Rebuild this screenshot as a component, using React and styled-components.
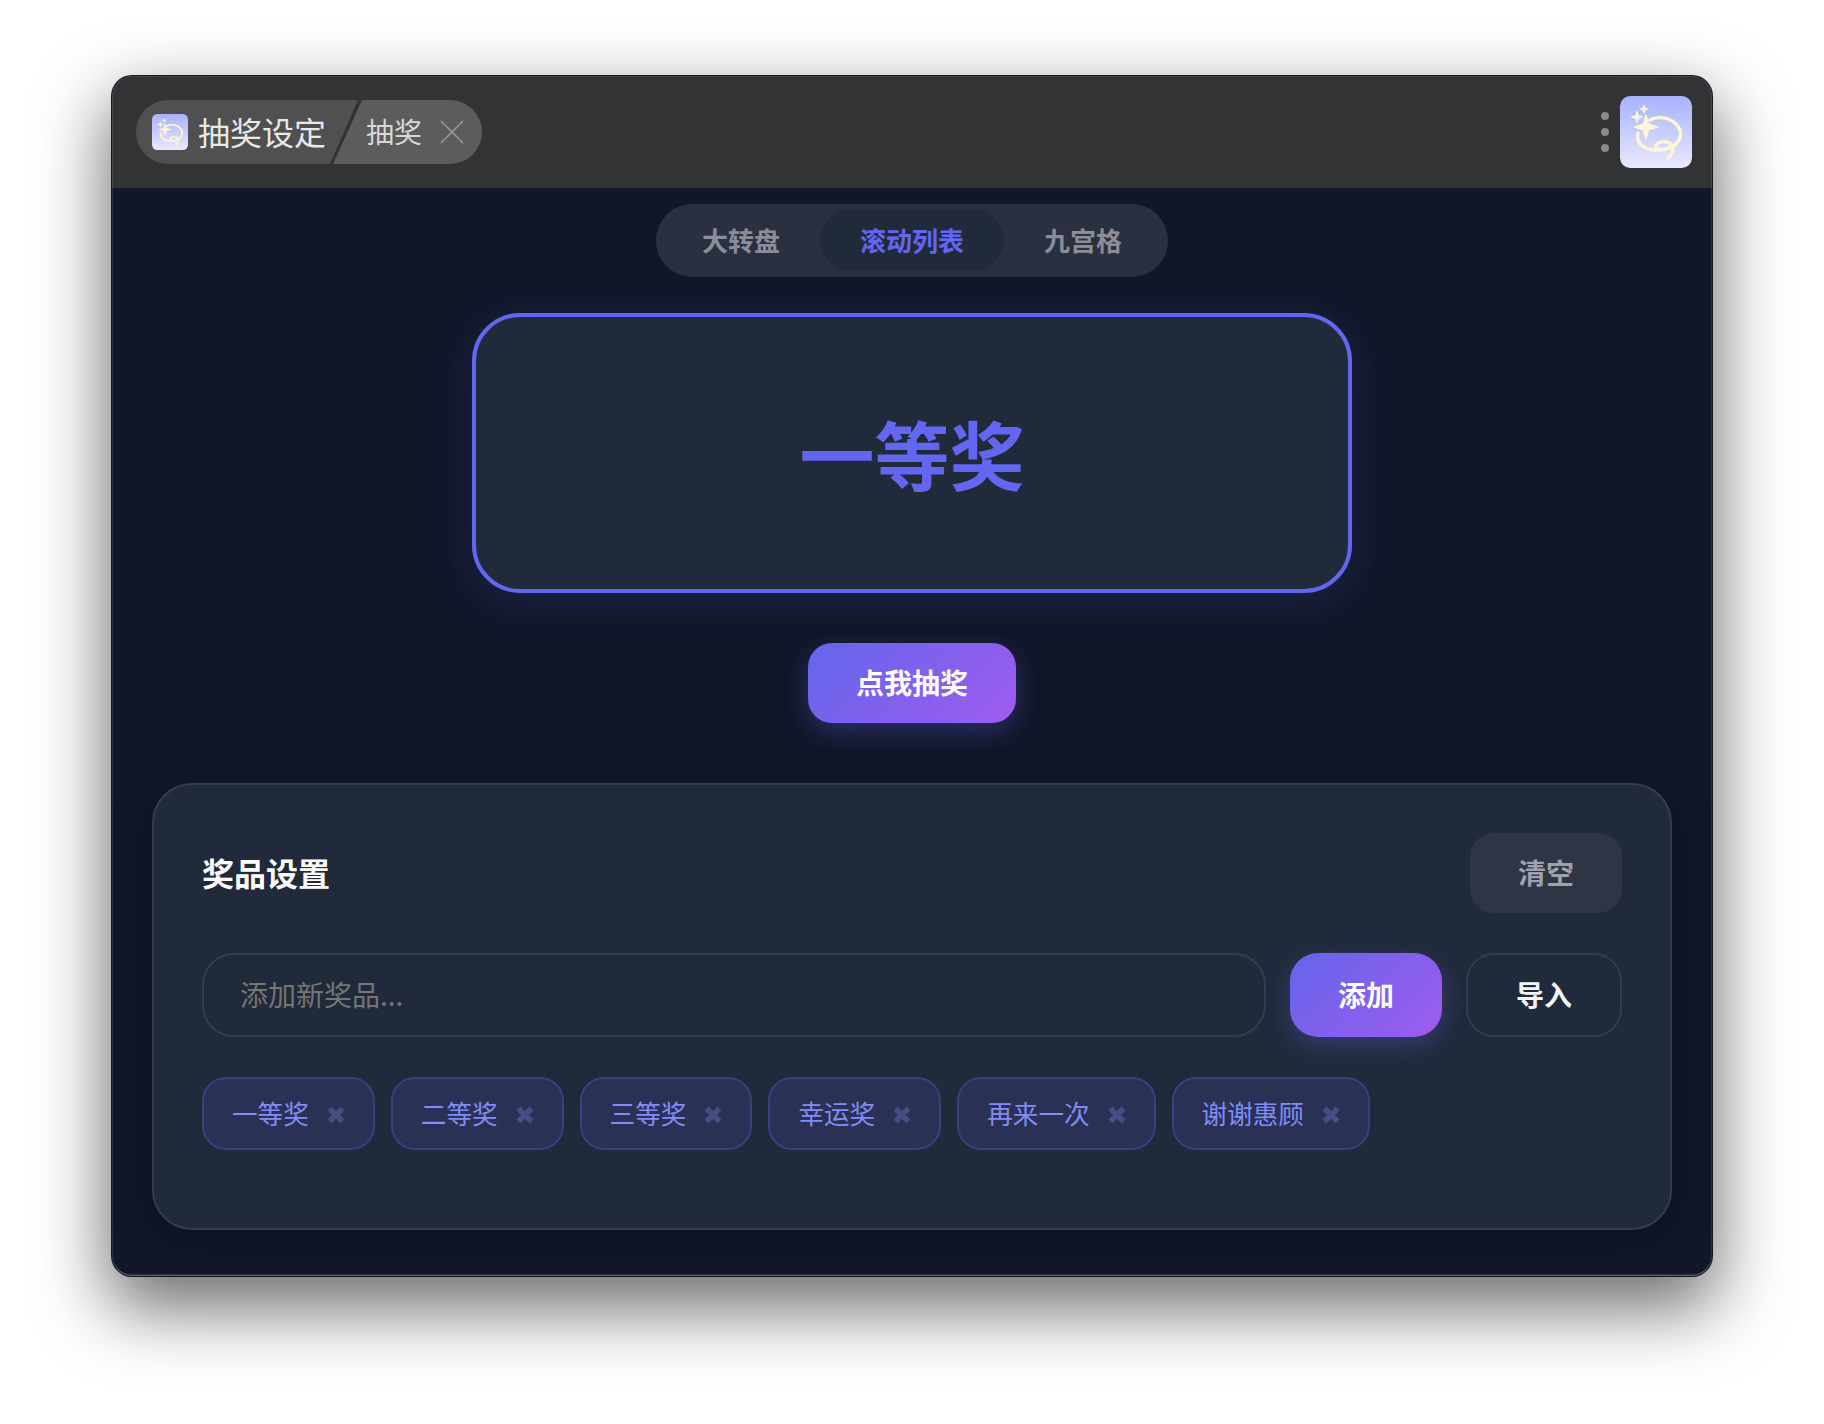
import React, { useState } from "react";
import styled, { createGlobalStyle } from "styled-components";

const GlobalStyle = createGlobalStyle`
  * { box-sizing: border-box; }
  html, body { margin: 0; background: #fff; }
  body { font-family: "Noto Sans CJK SC", "Noto Sans", sans-serif; }
`;

const Page = styled.div`
  width: 1824px;
  height: 1424px;
  padding-top: 76px;
  overflow: hidden;
`;

const Window = styled.div`
  position: relative;
  width: 1600px;
  height: 1200px;
  margin: 0 auto;
  border-radius: 20px;
  overflow: hidden;
  display: flex;
  flex-direction: column;
  background: #111729;
  box-shadow: 0 0 0 1px #18181a, 0 28px 70px 4px rgba(0, 0, 0, 0.58);
  &::after {
    content: "";
    position: absolute;
    inset: 0;
    border-radius: 20px;
    pointer-events: none;
    box-shadow: inset 0 -1.5px 0 rgba(255, 255, 255, 0.24), inset 0 0 0 1px rgba(255, 255, 255, 0.1);
  }
`;

const TitleBar = styled.header`
  height: 112px;
  flex: none;
  background: #323335;
  display: flex;
  align-items: center;
  justify-content: space-between;
  padding: 0 20px 0 24px;
`;

const Crumbs = styled.div`
  display: flex;
  height: 64px;
`;

const MainCrumb = styled.div`
  width: 222px;
  padding: 0 0 2px 16px;
  display: flex;
  align-items: center;
  gap: 10px;
  border-radius: 32px 0 0 32px;
  background: #505050;
  clip-path: polygon(0 0, 100% 0, calc(100% - 28px) 100%, 0 100%);
  color: #e8e8e8;
  font-size: 32px;
  white-space: nowrap;
`;

const SubCrumb = styled.div`
  width: 149px;
  margin-left: -25px;
  padding: 0 0 2px 33px;
  display: flex;
  align-items: center;
  gap: 18px;
  border-radius: 0 32px 32px 0;
  background: #5c5c5c;
  clip-path: polygon(29px 0, 100% 0, 100% 100%, 0 100%);
  color: #d8d8d8;
  font-size: 28px;
  white-space: nowrap;
`;

const CloseGlyph = styled.svg`
  width: 24px;
  height: 24px;
  flex: none;
  margin-top: 2px;
  stroke: #999;
  stroke-width: 1.6;
  fill: none;
`;

const TitleRight = styled.div`
  display: flex;
  align-items: center;
  gap: 11px;
`;

const Dots = styled.div`
  display: flex;
  flex-direction: column;
  gap: 8px;
`;

const Dot = styled.span`
  width: 8px;
  height: 8px;
  border-radius: 50%;
  background: #8b8b8b;
`;

const IconBox = styled.div`
  width: ${(p) => p.$size}px;
  height: ${(p) => p.$size}px;
  flex: none;
  margin-top: ${(p) => (p.$size < 50 ? 2 : 0)}px;
  border-radius: ${(p) => p.$size / 7}px;
  overflow: hidden;
  background: linear-gradient(180deg, #a6b2fd 0%, #e9e9ff 100%);
  svg {
    display: block;
    width: 100%;
    height: 100%;
  }
`;

const Main = styled.main`
  flex: 1;
  display: flex;
  flex-direction: column;
  align-items: center;
  padding-top: 16px;
`;

const ModeTabs = styled.div`
  width: 512px;
  height: 73px;
  padding: 6px 8px 7px;
  display: flex;
  border-radius: 37px;
  background: #2b3040;
`;

const ModeTab = styled.button`
  border: 0;
  padding: 0 ${(p) => (p.$active ? 40 : 39)}px 2px;
  border-radius: 30px;
  font: 700 26px "Noto Sans CJK SC", sans-serif;
  color: ${(p) => (p.$active ? "#6366f1" : "#8b8e98")};
  background: ${(p) => (p.$active ? "#212a3a" : "transparent")};
  white-space: nowrap;
  &:first-child {
    padding-left: 38px;
    padding-right: 40px;
  }
  &:last-child {
    padding-left: 40px;
    padding-right: 38px;
  }
`;

const ResultCard = styled.div`
  width: 880px;
  height: 280px;
  margin-top: 36px;
  padding-bottom: 2px;
  border: 4px solid #6366f1;
  border-radius: 48px;
  background: #212a3b;
  box-shadow: 0 8px 40px rgba(99, 102, 241, 0.15);
  display: flex;
  align-items: center;
  justify-content: center;
  color: #6366f1;
  font-size: 75px;
  font-weight: 700;
`;

const DrawButton = styled.button`
  width: 208px;
  height: 80px;
  margin-top: 50px;
  padding: 0 0 2px;
  border: 0;
  border-radius: 24px;
  background: linear-gradient(135deg, #6366ea, #9f5bef);
  box-shadow: 0 8px 24px rgba(99, 102, 241, 0.3);
  color: #fff;
  font: 700 28px "Noto Sans CJK SC", sans-serif;
`;

const Panel = styled.section`
  width: 1520px;
  height: 447px;
  margin-top: 60px;
  padding: 48px;
  border: 2px solid #343c4d;
  border-radius: 40px;
  background: #212a3b;
  box-shadow: 0 8px 40px rgba(0, 0, 0, 0.25);
`;

const PanelHead = styled.div`
  display: flex;
  align-items: center;
  justify-content: space-between;
`;

const PanelTitle = styled.h2`
  margin: 0 0 2px;
  color: #fff;
  font-size: 32px;
  font-weight: 700;
`;

const ClearButton = styled.button`
  width: 152px;
  height: 80px;
  padding: 0 0 2px;
  border: 0;
  border-radius: 24px;
  background: #2e3545;
  color: #9ca3af;
  font: 700 28px "Noto Sans CJK SC", sans-serif;
`;

const InputRow = styled.div`
  display: flex;
  gap: 24px;
  margin-top: 40px;
`;

const PrizeInput = styled.input`
  flex: 1;
  min-width: 0;
  height: 84px;
  padding: 0 36px 3px;
  border: 2px solid #343c4d;
  border-radius: 32px;
  outline: none;
  background: #212a3b;
  color: #fff;
  font: 400 28px "Noto Sans CJK SC", sans-serif;
  &::placeholder {
    color: #757575;
    opacity: 1;
  }
`;

const AddButton = styled.button`
  width: 152px;
  height: 84px;
  padding: 0 0 2px;
  border: 0;
  border-radius: 28px;
  background: linear-gradient(135deg, #6366ea, #9f5bef);
  box-shadow: 0 8px 24px rgba(99, 102, 241, 0.3);
  color: #fff;
  font: 700 28px "Noto Sans CJK SC", sans-serif;
`;

const ImportButton = styled.button`
  width: 156px;
  height: 84px;
  padding: 0 0 2px;
  border: 2px solid #343c4d;
  border-radius: 28px;
  background: #212a3b;
  color: #f1f5f9;
  font: 700 28px "Noto Sans CJK SC", sans-serif;
`;

const TagList = styled.div`
  display: flex;
  gap: 16px;
  margin-top: 40px;
`;

const Tag = styled.div`
  height: 73px;
  padding: 0 28px 2px 28px;
  display: flex;
  align-items: center;
  gap: 18px;
  border: 2px solid #3a3f7e;
  border-radius: 24px;
  background: #2a3154;
  color: #818cf8;
  font-size: 25.6px;
  white-space: nowrap;
`;

const TagRemove = styled.svg`
  width: 18px;
  height: 18px;
  flex: none;
  margin-top: 4px;
  stroke: #454e84;
  stroke-width: 5.5;
  fill: none;
`;

const prizes = ["一等奖", "二等奖", "三等奖", "幸运奖", "再来一次", "谢谢惠顾"];
const modes = ["大转盘", "滚动列表", "九宫格"];

const star = (cx, cy, r) => {
  const k = r * 0.24;
  return `M${cx} ${cy - r}L${cx + k} ${cy - k}L${cx + r} ${cy}L${cx + k} ${cy + k}L${cx} ${cy + r}L${cx - k} ${cy + k}L${cx - r} ${cy}L${cx - k} ${cy - k}Z`;
};

function LuckyIcon({ size }) {
  return (
    <IconBox $size={size}>
      <svg viewBox="0 0 72 72" fill="none">
        <g stroke="#fdf5d6" strokeWidth="3.4" strokeLinecap="round">
          <path d="M30 24C42 18 56 24 60 34C63 44 55 51 45 53C38 54 34 52 36 49C39 45 49 44 52 50C54 54 51 59 48 62" />
          <path d="M18 37C16 46 22 53 34 54C38 54 42 54 46 53" />
        </g>
        <g fill="#fdf5d6" stroke="#fdf5d6" strokeWidth="1.2" strokeLinejoin="round">
          <path d={star(26, 31, 12)} />
          <path d={star(17, 21, 5.5)} />
          <path d={star(24, 13, 3.8)} />
        </g>
      </svg>
    </IconBox>
  );
}

export default function App() {
  const [mode] = useState(1);

  return (
    <Page>
      <GlobalStyle />
      <Window>
        <TitleBar>
          <Crumbs>
            <MainCrumb>
              <LuckyIcon size={36} />
              抽奖设定
            </MainCrumb>
            <SubCrumb>
              抽奖
              <CloseGlyph viewBox="0 0 24 24">
                <path d="M1 1L23 23M23 1L1 23" />
              </CloseGlyph>
            </SubCrumb>
          </Crumbs>
          <TitleRight>
            <Dots>
              <Dot />
              <Dot />
              <Dot />
            </Dots>
            <LuckyIcon size={72} />
          </TitleRight>
        </TitleBar>
        <Main>
          <ModeTabs>
            {modes.map((m, i) => (
              <ModeTab key={m} $active={i === mode}>
                {m}
              </ModeTab>
            ))}
          </ModeTabs>
          <ResultCard>一等奖</ResultCard>
          <DrawButton>点我抽奖</DrawButton>
          <Panel>
            <PanelHead>
              <PanelTitle>奖品设置</PanelTitle>
              <ClearButton>清空</ClearButton>
            </PanelHead>
            <InputRow>
              <PrizeInput placeholder="添加新奖品..." />
              <AddButton>添加</AddButton>
              <ImportButton>导入</ImportButton>
            </InputRow>
            <TagList>
              {prizes.map((p) => (
                <Tag key={p}>
                  {p}
                  <TagRemove viewBox="0 0 18 18">
                    <path d="M2.5 2.5L15.5 15.5M15.5 2.5L2.5 15.5" />
                  </TagRemove>
                </Tag>
              ))}
            </TagList>
          </Panel>
        </Main>
      </Window>
    </Page>
  );
}
